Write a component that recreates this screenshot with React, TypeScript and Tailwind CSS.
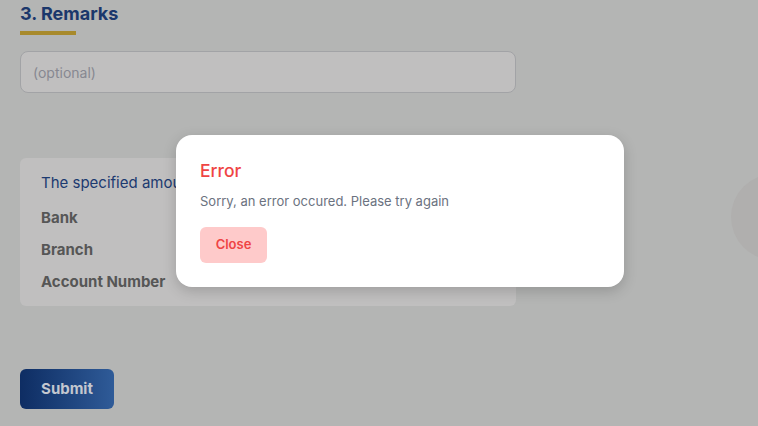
import React from "react";

export default function App() {
  return (
    <div
      className="relative w-[758px] h-[426px] overflow-hidden bg-[#b4b5b4]"
      style={{ fontFamily: "Inter, 'Noto Sans', sans-serif" }}
    >
      <div className="flex flex-col px-5 pt-[3px]">
        <h2 className="text-[18px] leading-[22px] font-bold text-[#1b376b]">3. Remarks</h2>
        <div className="mt-[6px] h-[4px] w-[56px] bg-[#a88a2c]" />
        <div className="mt-[16px] w-[496px] h-[42px] rounded-[8px] border border-[#a2a3a6] bg-[#c0bfbf] flex items-center px-3">
          <span className="text-[14px] text-[#878891]">(optional)</span>
        </div>
        <div className="mt-[65px] w-[496px] h-[148px] rounded-[6px] bg-[#c0bfbf] px-[21px] pt-[14px] flex flex-col">
          <div className="text-[15px] leading-[22px] text-[#1c3a70]">The specified amount will be transferred to</div>
          <div className="mt-[13px] text-[15px] leading-[22px] font-bold text-[#565656]">Bank</div>
          <div className="mt-[10px] text-[15px] leading-[22px] font-bold text-[#565656]">Branch</div>
          <div className="mt-[10px] text-[15px] leading-[22px] font-bold text-[#565656]">Account Number</div>
        </div>
        <button className="mt-[63px] w-[94px] h-[40px] rounded-[6px] bg-gradient-to-r from-[#0e2d63] to-[#2f5b98] text-[15px] font-bold text-[#c3c7cf]">
          Submit
        </button>
      </div>

      <div className="absolute left-[731px] top-[174px] w-[86px] h-[86px] rounded-full bg-[#b0afae]" />

      <div className="absolute left-[176px] top-[135px] w-[448px] h-[152px] rounded-[16px] bg-white shadow-[0_4px_14px_rgba(0,0,0,0.18)] px-6 pt-[24px] flex flex-col items-start">
        <div className="text-[17.5px] leading-[24px] font-medium text-[#ef4444]">Error</div>
        <div className="mt-[8px] text-[13px] leading-[20px] text-[#6b7280]">Sorry, an error occured. Please try again</div>
        <button className="mt-[16px] w-[67px] h-[36px] rounded-[6px] bg-[#fecaca] text-[13px] font-semibold text-[#ef4444]">
          Close
        </button>
      </div>
    </div>
  );
}
